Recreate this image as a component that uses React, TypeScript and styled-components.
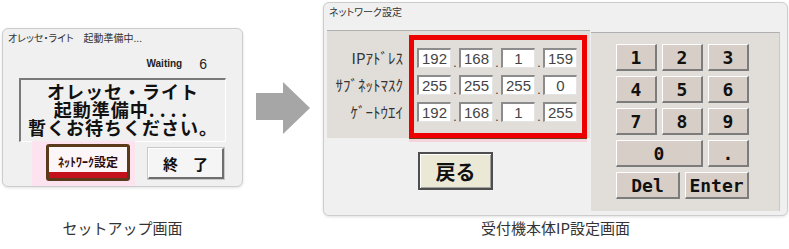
import React from 'react';
import styled, { createGlobalStyle } from 'styled-components';

const GlobalStyle = createGlobalStyle`
  html, body { margin: 0; padding: 0; background: #ffffff; }
  body {
    width: 789px; height: 249px; overflow: hidden;
    font-family: "Noto Sans CJK JP", "Noto Sans", sans-serif;
    color: #222;
  }
`;

const Page = styled.div`
  display: grid;
  grid-template-columns: 241px 54px 465px;
  grid-template-rows: 216px auto;
  column-gap: 13px;
  padding-left: 2px;
`;

const Window = styled.div<{ $top: number; $w: number; $h: number }>`
  align-self: start;
  margin-top: ${p => p.$top}px;
  width: ${p => p.$w}px;
  height: ${p => p.$h}px;
  box-sizing: border-box;
  border: 1px solid #cdcdcd;
  border-radius: 6px;
  background: #f0f0f0;
  box-shadow: 0 1px 3px rgba(0, 0, 0, 0.12);
  display: flex;
  flex-direction: column;
`;

const TitleBar = styled.div<{ $h: number }>`
  height: ${p => p.$h}px;
  line-height: 18px;
  padding-left: 5px;
  font-size: 10px;
  color: #333;
  font-feature-settings: "palt";
  white-space: nowrap;
`;

const WaitingRow = styled.div`
  display: flex;
  justify-content: flex-end;
  align-items: center;
  gap: 17px;
  height: 18px;
  margin-top: 8px;
  padding-right: 35px;
  font-family: "Liberation Sans", sans-serif;
  color: #222;
`;

const WaitLabel = styled.span`
  font-size: 10px;
  font-weight: 700;
`;

const WaitCount = styled.span`
  font-size: 14px;
`;

const MessageBox = styled.div`
  margin: 6px 0 0 16px;
  width: 207px;
  height: 66px;
  box-sizing: border-box;
  padding-bottom: 4px;
  border-top: 2px solid #7a7a7a;
  border-left: 2px solid #7a7a7a;
  border-right: 1px solid #ffffff;
  border-bottom: 1px solid #ffffff;
  display: flex;
  flex-direction: column;
  justify-content: center;
  align-items: center;
  font-size: 18px;
  letter-spacing: 1px;
  font-weight: 700;
  line-height: 18px;
  color: #111;
  white-space: nowrap;
`;

const MessageLine = styled.div`
  height: 18px;
  overflow: visible;
`;

const Dots = styled.span`
  letter-spacing: 5px;
`;

const ButtonRow = styled.div`
  display: flex;
  align-items: center;
  margin-top: -1px;
  padding-left: 29px;
`;

const Highlight = styled.div`
  background: #fde3f0;
  padding: 3px 5px 5px 14px;
`;

const NetButton = styled.div`
  width: 84px;
  height: 37px;
  box-sizing: border-box;
  border: 3px solid #5b3a1c;
  border-radius: 3px;
  background: #fdf6f9;
  box-shadow: inset 0 -6px 0 #c4121c;
  display: flex;
  align-items: center;
  justify-content: center;
  padding-bottom: 2px;
  font-size: 12px;
  font-weight: 700;
  color: #2a0a0a;
  white-space: nowrap;
`;

const EndButton = styled.div`
  margin-left: 13px;
  width: 76px;
  height: 31px;
  box-sizing: border-box;
  border-top: 1px solid #ffffff;
  border-left: 1px solid #ffffff;
  border-right: 2px solid #6e6e6e;
  border-bottom: 2px solid #6e6e6e;
  outline: 1px solid #c8c8c8;
  background: #f5f5f5;
  display: flex;
  align-items: center;
  justify-content: center;
  font-size: 15px;
  font-weight: 700;
  color: #111;
  white-space: pre;
`;

const ArrowCell = styled.div`
  align-self: start;
  margin-top: 82px;
  height: 52px;
`;

const Content = styled.div`
  display: flex;
  gap: 1px;
  padding-left: 3px;
`;

const LeftCol = styled.div`
  width: 263px;
  display: flex;
  flex-direction: column;
`;

const IPPanel = styled.div`
  height: 108px;
  box-sizing: border-box;
  background: #e1ddd9;
  border-top: 1px solid #b0b0b0;
  display: flex;
  padding: 4px 3px 0 0;
`;

const Labels = styled.div`
  width: 76px;
  padding-top: 13px;
  display: flex;
  flex-direction: column;
  gap: 7px;
`;

const Label = styled.div`
  height: 20px;
  line-height: 20px;
  text-align: right;
  font-size: 15px;
  color: #333;
  white-space: nowrap;
`;

const RedBox = styled.div`
  margin-left: 6px;
  border: 5px solid #ee0000;
  padding: 8px 5px 2px 3px;
  box-shadow: 0 1px 0 #6b3a1a, 0 4px 0 #f7d3dc;
  display: flex;
  flex-direction: column;
  gap: 7px;
`;

const FieldRow = styled.div`
  display: grid;
  grid-template-columns: 34px 8px 34px 8px 34px 8px 34px;
  height: 20px;
`;

const Field = styled.div`
  box-sizing: border-box;
  background: #ffffff;
  border-top: 2px solid #8c8c8c;
  border-left: 2px solid #8c8c8c;
  border-right: 1px solid #e4e4e4;
  border-bottom: 1px solid #e4e4e4;
  font-family: "Liberation Sans", sans-serif;
  font-size: 15px;
  line-height: 17px;
  text-align: center;
  color: #444;
`;

const Dot = styled.div`
  align-self: end;
  text-align: center;
  font-family: "Liberation Sans", sans-serif;
  font-size: 12px;
  line-height: 10px;
  color: #333;
`;

const BackButton = styled.div`
  margin: 14px 0 0 91px;
  width: 75px;
  height: 38px;
  box-sizing: border-box;
  border: 2px solid #4e4e4e;
  background: #ebe8d6;
  box-shadow: inset 1px 1px 0 #ffffff, inset -1px -1px 0 #a0a0a0;
  display: flex;
  align-items: center;
  justify-content: center;
  font-size: 20px;
  font-weight: 700;
  color: #111;
`;

const Keypad = styled.div`
  margin-top: 2px;
  width: 189px;
  height: 179px;
  box-sizing: border-box;
  background: #e1ddd9;
  border-top: 1px solid #b0b0b0;
  border-right: 1px solid #c8c8c8;
  padding: 11px 0 0 25px;
`;

const KeyGrid = styled.div`
  display: grid;
  grid-template-columns: repeat(6, 18px);
  grid-auto-rows: 27px;
  gap: 5px;
`;

const Key = styled.div<{ $span: number }>`
  grid-column: span ${p => p.$span};
  box-sizing: border-box;
  background: #d7cfc7;
  border-top: 1px solid #ffffff;
  border-left: 1px solid #ffffff;
  border-right: 2px solid #7c7c7c;
  border-bottom: 2px solid #7c7c7c;
  display: flex;
  align-items: center;
  justify-content: center;
  font-family: "DejaVu Sans Mono", monospace;
  font-weight: 700;
  font-size: 18px;
  color: #111;
`;

const Caption = styled.div`
  padding-top: 2px;
  text-align: center;
  font-size: 15px;
  line-height: 20px;
  color: #333;
  white-space: nowrap;
`;

const rows: { label: string; values: string[] }[] = [
  { label: 'IPｱﾄﾞﾚｽ', values: ['192', '168', '1', '159'] },
  { label: 'ｻﾌﾞﾈｯﾄﾏｽｸ', values: ['255', '255', '255', '0'] },
  { label: 'ｹﾞｰﾄｳｴｲ', values: ['192', '168', '1', '255'] },
];

const keys: { k: string; span: number }[] = [
  { k: '1', span: 2 }, { k: '2', span: 2 }, { k: '3', span: 2 },
  { k: '4', span: 2 }, { k: '5', span: 2 }, { k: '6', span: 2 },
  { k: '7', span: 2 }, { k: '8', span: 2 }, { k: '9', span: 2 },
  { k: '0', span: 4 }, { k: '.', span: 2 },
  { k: 'Del', span: 3 }, { k: 'Enter', span: 3 },
];

export default function App() {
  return (
    <>
      <GlobalStyle />
      <Page>
        <Window $top={28} $w={241} $h={159}>
          <TitleBar $h={19}>オレッセ・ライト　起動準備中...</TitleBar>
          <WaitingRow>
            <WaitLabel>Waiting</WaitLabel>
            <WaitCount>6</WaitCount>
          </WaitingRow>
          <MessageBox>
            <MessageLine>オレッセ・ライト</MessageLine>
            <MessageLine>起動準備中<Dots>....</Dots></MessageLine>
            <MessageLine>暫くお待ちください。</MessageLine>
          </MessageBox>
          <ButtonRow>
            <Highlight>
              <NetButton>ﾈｯﾄﾜｰｸ設定</NetButton>
            </Highlight>
            <EndButton>終　了</EndButton>
          </ButtonRow>
        </Window>

        <ArrowCell>
          <svg width="54" height="52" viewBox="0 0 54 52">
            <polygon points="0,11 27,11 27,0 54,26 27,52 27,38 0,38" fill="#a6a6a6" />
          </svg>
        </ArrowCell>

        <Window $top={2} $w={465} $h={214}>
          <TitleBar $h={27}>ネットワーク設定</TitleBar>
          <Content>
            <LeftCol>
              <IPPanel>
                <Labels>
                  {rows.map(r => <Label key={r.label}>{r.label}</Label>)}
                </Labels>
                <RedBox>
                  {rows.map(r => (
                    <FieldRow key={r.label}>
                      {r.values.map((v, i) => (
                        <React.Fragment key={i}>
                          {i > 0 && <Dot>.</Dot>}
                          <Field>{v}</Field>
                        </React.Fragment>
                      ))}
                    </FieldRow>
                  ))}
                </RedBox>
              </IPPanel>
              <BackButton>戻る</BackButton>
            </LeftCol>
            <Keypad>
              <KeyGrid>
                {keys.map(k => <Key key={k.k} $span={k.span}>{k.k}</Key>)}
              </KeyGrid>
            </Keypad>
          </Content>
        </Window>

        <Caption>セットアップ画面</Caption>
        <div />
        <Caption>受付機本体IP設定画面</Caption>
      </Page>
    </>
  );
}
